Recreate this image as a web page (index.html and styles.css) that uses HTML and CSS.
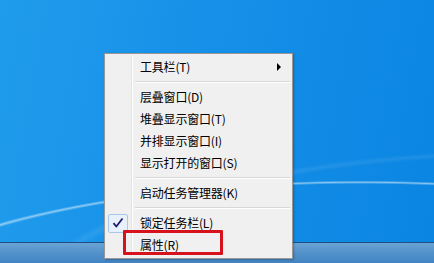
FILE: index.html
```html
<!DOCTYPE html>
<html lang="zh-CN">
<head>
<meta charset="utf-8">
<link rel="stylesheet" href="styles.css">
</head>
<body>
<div class="screen">
  <div class="desktop"></div>
  <div class="taskbar"></div>

  <div class="menu">
    <div class="item"><span class="icon"></span><span class="label">工具栏(T)</span><span class="arrow"></span></div>
    <div class="sep"></div>
    <div class="item"><span class="icon"></span><span class="label">层叠窗口(D)</span></div>
    <div class="item"><span class="icon"></span><span class="label">堆叠显示窗口(T)</span></div>
    <div class="item"><span class="icon"></span><span class="label">并排显示窗口(I)</span></div>
    <div class="item"><span class="icon"></span><span class="label">显示打开的窗口(S)</span></div>
    <div class="sep"></div>
    <div class="item"><span class="icon"></span><span class="label">启动任务管理器(K)</span></div>
    <div class="sep"></div>
    <div class="item"><span class="icon"><span class="check"><svg width="12" height="12" viewBox="0 0 12 12"><path d="M1.5 6.2 L4.3 9.5 L10.5 1.5" fill="none" stroke="#1b1b6e" stroke-width="1.8" stroke-linejoin="round"/></svg></span></span><span class="label">锁定任务栏(L)</span></div>
    <div class="item"><span class="icon"></span><span class="label">属性(R)</span></div>
    <div class="highlight"></div>
  </div>
</div>
</body>
</html>
```

FILE: styles.css
```css
html, body {
  margin: 0;
  padding: 0;
}
body {
  width: 434px;
  height: 263px;
  overflow: hidden;
  font-family: "Noto Sans CJK SC", "Microsoft YaHei", sans-serif;
  font-size: 12px;
}
.screen {
  position: relative;
  width: 434px;
  height: 263px;
  display: flex;
  flex-direction: column;
}
.desktop {
  flex: 1;
  background:
    radial-gradient(ellipse 520px 150px at 360px 330px, transparent 97.3%, rgba(255,255,255,0.5) 98.5%, transparent 99.6%),
    radial-gradient(ellipse 520px 180px at 520px 330px, transparent 96%, rgba(255,255,255,0.08) 98%, transparent 100%),
    linear-gradient(100deg, #209cec 0%, #1690e8 45%, #0a85e2 100%);
}
.taskbar {
  height: 20px;
  border-top: 1px solid #1d4f80;
  background: linear-gradient(180deg, #6aa3d4 0%, #5292cb 50%, #4284c3 100%);
}
.menu {
  position: absolute;
  left: 104px;
  top: 53px;
  width: 183px;
  padding: 2px;
  background: #f0f0f0;
  border: 1px solid #979797;
  box-shadow: 1px 1px 2px rgba(0,0,0,0.25);
}
.item {
  height: 22px;
  display: flex;
  align-items: center;
  color: #000;
  line-height: 22px;
}
.icon {
  width: 24px;
  height: 22px;
  margin-right: 3px;
  border-right: 1px solid #e2e3e3;
  box-shadow: 1px 0 0 #ffffff;
  display: flex;
  align-items: center;
  justify-content: flex-start;
  flex-shrink: 0;
}
.label {
  flex: 1;
  padding-left: 5px;
  white-space: nowrap;
  letter-spacing: -0.2px;
}
.arrow {
  width: 0;
  height: 0;
  border-left: 4px solid #000;
  border-top: 4px solid transparent;
  border-bottom: 4px solid transparent;
  margin-right: 9px;
}
.sep {
  height: 8px;
  display: flex;
  align-items: center;
}
.sep::before {
  content: "";
  width: 24px;
  height: 8px;
  border-right: 1px solid #e2e3e3;
  box-shadow: 1px 0 0 #ffffff;
  flex-shrink: 0;
}
.sep::after {
  content: "";
  flex: 1;
  margin-left: 3px;
  height: 1px;
  border-bottom: 1px solid #ffffff;
  background: #d7d7d7;
}
.check {
  width: 20px;
  height: 19px;
  margin-left: 1px;
  box-sizing: border-box;
  border: 1px solid #a8c8e6;
  border-radius: 2px;
  background: #e8f1fb;
  display: flex;
  align-items: center;
  justify-content: center;
}
.highlight {
  position: absolute;
  left: 18px;
  top: 176px;
  width: 94px;
  height: 19px;
  border: 3px solid #d8121c;
  border-radius: 1px;
}
```
